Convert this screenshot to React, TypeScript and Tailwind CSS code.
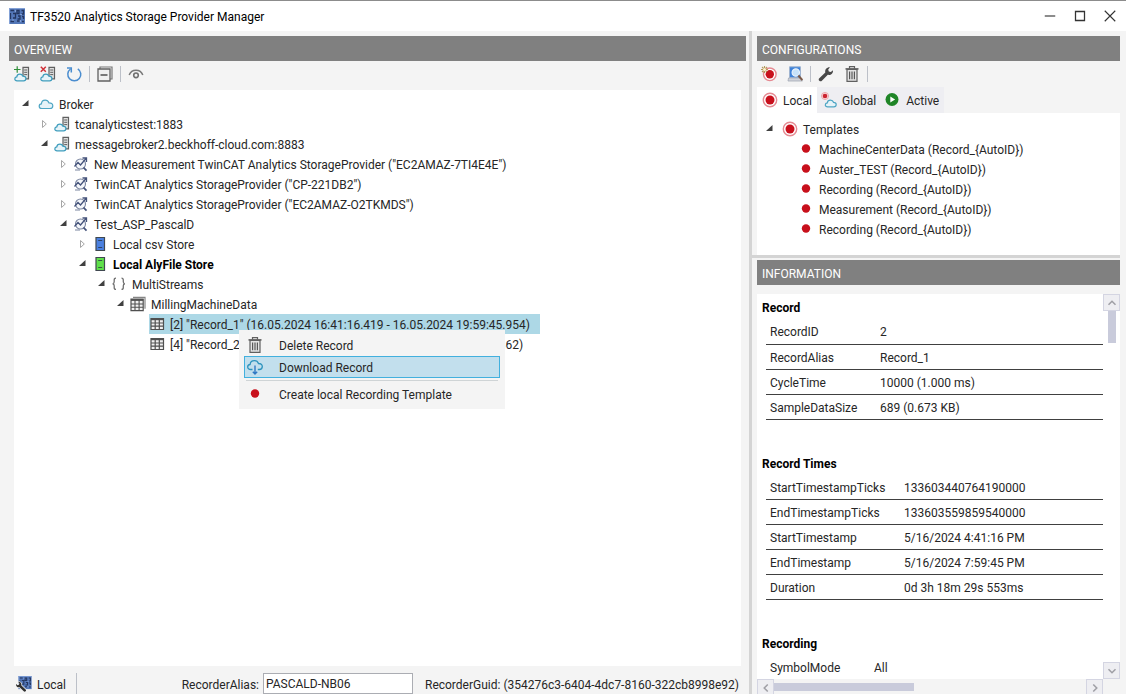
import React from "react";

type IconProps = { className?: string };

const Svg = ({ className = "size-4", children }: { className?: string; children: React.ReactNode }) => (
  <svg viewBox="0 0 16 16" className={`shrink-0 ${className}`} fill="none" aria-hidden="true">
    {children}
  </svg>
);

const cloudPath = "M3.800 12.500C2.200 12.500 1.200 11.500 1.200 10.200s.9-2.200 2.200-2.300C3.600 5.600 5.100 4.200 7.200 4.200c1.800 0 3.100 1 3.700 2.600 2.200-.1 3.900 1 3.900 2.900 0 1.700-1.200 2.800-2.800 2.800z";

const Cloud = ({ className }: IconProps) => (
  <Svg className={className}>
    <path d={cloudPath} fill="#e6f3f8" stroke="#4fa6c4" strokeWidth="1.200" />
  </Svg>
);

const ServerShapes = () => (
  <>
    <path d="M9 1.300h5.500v11.500H9z" fill="#e0e0e0" stroke="#606060" strokeWidth="1.200" />
    <path d="M10.200 4h3M10.200 6.300h3M10.200 8.600h3" stroke="#606060" />
    <path
      d="M3 14.800c-1.300 0-2.200-.8-2.200-1.900S1.700 11 2.800 10.900C3 9.200 4.200 8.200 5.900 8.200c1.500 0 2.600.8 3 2 1.700 0 3 .8 3 2.300 0 1.400-1 2.300-2.300 2.300z"
      fill="#e6f3f8"
      stroke="#3f9dbd"
      strokeWidth="1.200"
    />
  </>
);

const CloudServer = () => (
  <Svg>
    <ServerShapes />
  </Svg>
);

const AddServer = () => (
  <Svg>
    <ServerShapes />
    <path d="M0 3.500h6.500M3.200.200v6.600" stroke="#2f8f3a" strokeWidth="1.200" />
  </Svg>
);

const RemoveServer = () => (
  <Svg>
    <ServerShapes />
    <path d="M.8.800l5 5M5.800.800l-5 5" stroke="#cf3038" strokeWidth="1.500" />
  </Svg>
);

const Refresh = () => (
  <Svg>
    <path d="M4.500 3A6.500 6.500 0 1 0 11.800 2.800" stroke="#4a8dcf" strokeWidth="1.500" />
    <path d="M1 2h4.300v4.500" stroke="#4a8dcf" strokeWidth="1.500" />
  </Svg>
);

const CollapseAll = () => (
  <Svg>
    <path d="M3 3V1h12v12h-2" stroke="#777" strokeWidth="1.200" />
    <path d="M1 3h12v12H1z" fill="#f0f0f0" stroke="#606060" strokeWidth="1.300" />
    <path d="M3.500 9h7" stroke="#505050" strokeWidth="1.500" />
  </Svg>
);

const Eye = () => (
  <Svg>
    <path d="M1.200 9C2.400 5.800 4.900 4.200 8 4.200s5.600 1.600 6.800 4.800" stroke="#787878" strokeWidth="1.500" />
    <circle cx="8" cy="9.300" r="2.300" stroke="#707070" strokeWidth="1.600" />
  </Svg>
);

const Provider = () => (
  <Svg>
    <circle cx="7.500" cy="8" r="5" fill="#f3f5f9" stroke="#7b86a0" strokeWidth="1.100" />
    <path d="M1.500 10.500l3.500-4 2.500 2.500L13 2.500M9.500 2h4v4" stroke="#44527a" strokeWidth="1.300" />
    <path d="M10.500 11.500l3 3.200" stroke="#44527a" strokeWidth="1.800" />
    <path d="M2 14h5" stroke="#7b86a0" />
  </Svg>
);

const Store = ({ color }: { color: string }) => (
  <Svg>
    <path d="M4 1.500h8.500v13H4z" fill={color} stroke="#404850" strokeWidth="1.200" />
    <path d="M6.200 4.500h4M6.200 11.500h4" stroke="#26303c" strokeOpacity=".75" />
  </Svg>
);

const Braces = () => (
  <Svg>
    <path
      d="M5 2.200C3.400 2.200 3.200 3 3.200 4.200v1.600C3.200 7 2.700 7.600 1.700 7.800 2.700 8 3.200 8.600 3.200 9.800v1.600c0 1.200.2 2 1.800 2M10.500 2.200c1.600 0 1.800.8 1.800 2v1.600c0 1.200.5 1.800 1.500 2-1 .2-1.500.8-1.500 2v1.600c0 1.200-.2 2-1.800 2"
      stroke="#707070"
      strokeWidth="1.300"
    />
  </Svg>
);

const Grid = () => (
  <Svg>
    <path d="M2 2.500h12.500v11H2z" fill="#f0f0f0" stroke="#505050" strokeWidth="1.200" />
    <path d="M2 3.200h12.500" stroke="#505050" strokeWidth="2" />
    <path d="M2 7h12.500M2 10.200h12.500M6.200 3v10.500M10.300 3v10.500" stroke="#505050" strokeWidth="1.200" />
  </Svg>
);

const GridStack = () => (
  <Svg>
    <path d="M3 1.300h12v11.500" stroke="#858585" strokeWidth="1.200" />
    <path d="M1 3.200h12.200v11.500H1z" fill="#f0f0f0" stroke="#505050" strokeWidth="1.200" />
    <path d="M1 4h12.200" stroke="#505050" strokeWidth="1.800" />
    <path d="M1 8h12.200M1 11.300h12.200M5 4v10.700M9.100 4v10.700" stroke="#505050" strokeWidth="1.100" />
  </Svg>
);

const Dot = () => (
  <Svg>
    <circle cx="8" cy="7.500" r="4.200" fill="#c8101c" />
  </Svg>
);

const RecordRing = () => (
  <Svg>
    <circle cx="8" cy="8" r="6.700" fill="#fff" stroke="#e58a92" strokeWidth="1.400" />
    <circle cx="8" cy="8" r="4.500" fill="#c8101c" />
  </Svg>
);

const NewRecord = () => (
  <Svg>
    <circle cx="8.800" cy="8.300" r="6.300" fill="#fff" stroke="#e58a92" strokeWidth="1.400" />
    <circle cx="8.800" cy="8.300" r="4.200" fill="#c8101c" />
    <path d="M3.500 0v7M0 3.500h7M1 1l5 5M6 1L1 6" stroke="#b59a5c" strokeWidth="1.100" />
    <circle cx="3.500" cy="3.500" r="1.500" fill="#fff3cf" />
  </Svg>
);

const SearchDevice = () => (
  <Svg>
    <path d="M2.500.8h11v11h-11z" fill="#3f83da" stroke="#9fb4d0" />
    <path d="M1.500 12h12l2 3H1z" fill="#cfd3da" stroke="#a3aab5" strokeWidth=".8" />
    <circle cx="8.800" cy="6.500" r="3.700" fill="#c6e2fa" stroke="#e8f2fb" strokeWidth="1.200" />
    <path d="M11.300 9.500l4 4.500" stroke="#7a5a48" strokeWidth="2" />
  </Svg>
);

const wrenchPath = "M1.300 14.700c-.8-.8-.8-1.700 0-2.500l6-5.700C6.700 3.500 8.700 1 12 1.200L10.200 3.500l.6 2 2 .6L15 4.200c.3 3.200-2.300 5.300-5.200 4.600l-5.900 6c-.8.800-1.800.7-2.600-.1z";

const Wrench = () => (
  <Svg>
    <path d={wrenchPath} fill="#484848" />
  </Svg>
);

const Trash = () => (
  <Svg>
    <path d="M5.500 2.500V.7h5v1.800" stroke="#606060" strokeWidth="1.200" />
    <path d="M1.500 2.900h13" stroke="#585858" strokeWidth="1.500" />
    <path d="M3 3.500h10v11.800H3z" fill="#e3e3e3" stroke="#606060" strokeWidth="1.200" />
    <path d="M5.600 5.500v7.700M8 5.500v7.700M10.400 5.500v7.700" stroke="#585858" strokeWidth="1.200" />
  </Svg>
);

const GlobalIcon = () => (
  <Svg>
    <circle cx="4" cy="4" r="3.500" fill="#fbe3e5" stroke="#eba3a9" />
    <circle cx="4" cy="4" r="2.300" fill="#cc2430" />
    <path
      d="M6.600 14.800c-1.400 0-2.300-.8-2.300-1.900s.9-1.900 2-2c.2-1.700 1.500-2.700 3.100-2.700 1.500 0 2.700.8 3.100 2.100 1.700 0 2.700 1 2.700 2.200 0 1.400-1 2.300-2.400 2.300z"
      fill="#e6f3f8"
      stroke="#4fa6c4"
      strokeWidth="1.200"
    />
  </Svg>
);

const Play = () => (
  <Svg>
    <circle cx="7" cy="7.500" r="6.500" fill="#1f8527" />
    <path d="M5.300 4.500l4.800 3-4.800 3z" fill="#fff" />
  </Svg>
);

const Download = () => (
  <Svg>
    <path d="M5.500 10.500H3.800C1.900 10.500.7 9.400.7 8s1-2.400 2.400-2.500C3.300 3.200 5 1.600 7.500 1.600c2 0 3.400 1.100 4 2.900 2.300-.1 3.800 1.100 3.800 3s-1.300 3-3 3h-1.500" stroke="#2c93bd" strokeWidth="1.300" />
    <path d="M8 6.500v8.300M5.800 12.700L8 14.900l2.200-2.200" stroke="#2f78c4" strokeWidth="1.400" />
  </Svg>
);

const BoardShapes = () => (
  <>
    <path d="M0 0h16v16H0z" fill="#5377b8" />
    <path d="M1.500 2.500H5M1.500 5v6M4 5.500h2.500V10H4M8 2.500h2v3H8zM12.500 2.500h2V6h-2M9 8h2v3H8.500M13 8.500h1.500V11M1.500 13.500H5M8 13h2.500M13 13.500h2" stroke="#24365f" strokeWidth="1.300" />
    <path d="M0 .5h16M.5 0v16M6.500 2v2M11 6.500h2M3 12h2M11.500 12v2" stroke="#83a1d6" />
  </>
);

const AppIcon = () => (
  <Svg>
    <BoardShapes />
  </Svg>
);

const LocalTool = () => (
  <Svg>
    <g transform="translate(2.500 0) scale(.82)">
      <BoardShapes />
    </g>
    <g transform="translate(10.500 5) scale(-.7 .7)">
      <path d={wrenchPath} fill="#303030" stroke="#f4f4f4" strokeWidth="2" paintOrder="stroke" />
    </g>
  </Svg>
);

const Separator = () => <span className="h-4 w-px bg-[#bcc0c8]" />;

const Label = ({ className = "", children }: { className?: string; children: React.ReactNode }) => (
  <span className={`pt-0.5 ${className}`}>{children}</span>
);

type ExpandState = "open" | "closed" | "none";

const Expander = ({ state }: { state: ExpandState }) => (
  <svg viewBox="0 0 8 10" className="h-2.5 w-2 shrink-0" aria-hidden="true">
    {state === "open" && <path d="M7.500 1v6H1z" fill="#404040" />}
    {state === "closed" && <path d="M2.500 1.500L6.300 5 2.500 8.500z" fill="#fff" stroke="#a6a6a6" />}
  </svg>
);

type Node = { level: number; state: ExpandState; icon: React.ReactNode; text: string; bold?: boolean; selected?: boolean };

const nodes: Node[] = [
  { level: 0, state: "open", icon: <Cloud />, text: "Broker" },
  { level: 1, state: "closed", icon: <CloudServer />, text: "tcanalyticstest:1883" },
  { level: 1, state: "open", icon: <CloudServer />, text: "messagebroker2.beckhoff-cloud.com:8883" },
  { level: 2, state: "closed", icon: <Provider />, text: 'New Measurement TwinCAT Analytics StorageProvider ("EC2AMAZ-7TI4E4E")' },
  { level: 2, state: "closed", icon: <Provider />, text: 'TwinCAT Analytics StorageProvider ("CP-221DB2")' },
  { level: 2, state: "closed", icon: <Provider />, text: 'TwinCAT Analytics StorageProvider ("EC2AMAZ-O2TKMDS")' },
  { level: 2, state: "open", icon: <Provider />, text: "Test_ASP_PascalD" },
  { level: 3, state: "closed", icon: <Store color="#4a80e0" />, text: "Local csv Store" },
  { level: 3, state: "open", icon: <Store color="#5fe04a" />, text: "Local AlyFile Store", bold: true },
  { level: 4, state: "open", icon: <Braces />, text: "MultiStreams" },
  { level: 5, state: "open", icon: <GridStack />, text: "MillingMachineData" },
  { level: 6, state: "none", icon: <Grid />, text: '[2] "Record_1" (16.05.2024 16:41:16.419 - 16.05.2024 19:59:45.954)', selected: true },
  { level: 6, state: "none", icon: <Grid />, text: '[4] "Record_2" (17.05.2024 08:03:12.107 - 17.05.2024 9:14:38.362)' },
];

const indents = ["pl-[7px]", "pl-[26px]", "pl-[45px]", "pl-[64px]", "pl-[83px]", "pl-[102px]", "pl-[121px]"];

const TreeRow = ({ node }: { node: Node }) => (
  <li role="treeitem" aria-selected={!!node.selected} className={`flex h-5 items-center ${indents[node.level]}`}>
    <Expander state={node.state} />
    <span
      className={`flex h-5 items-center gap-[5px] whitespace-nowrap pr-2.5 ${node.level === 0 ? "ml-[9px]" : "ml-1.5"} ${
        node.selected ? "bg-[#add8e6]" : ""
      }`}
    >
      {node.icon}
      <Label className={node.bold ? "font-bold text-black" : ""}>{node.text}</Label>
    </span>
  </li>
);

const PanelHeader = ({ title }: { title: string }) => (
  <h2 className="flex h-[25px] shrink-0 items-center bg-[#808080] px-[5px] text-white">
    <Label>{title}</Label>
  </h2>
);

const ToolButton = ({ label, children }: { label: string; children: React.ReactNode }) => (
  <button type="button" aria-label={label} className="flex size-4 items-center justify-center">
    {children}
  </button>
);

const ContextMenu = () => (
  <div role="menu" className="absolute left-[225px] top-60 flex w-[266px] flex-col bg-[#f4f4f4] px-[5px] py-1">
    <button type="button" role="menuitem" className="flex h-[22px] items-center gap-4 px-[3px]">
      <Trash />
      <Label>Delete Record</Label>
    </button>
    <button type="button" role="menuitem" className="flex h-[22px] items-center gap-4 border border-[#42b0de] bg-[#c2dfed] px-0.5">
      <Download />
      <Label>Download Record</Label>
    </button>
    <div className="mx-0.5 my-0.5 h-px bg-[#cfd4d6]" />
    <button type="button" role="menuitem" className="flex h-[22px] items-center gap-4 px-[3px]">
      <Dot />
      <Label>Create local Recording Template</Label>
    </button>
  </div>
);

const Overview = () => (
  <section className="flex min-w-0 flex-1 flex-col">
    <PanelHeader title="OVERVIEW" />
    <div className="flex h-[29px] shrink-0 items-center gap-[7px] px-[5px] pb-1">
      <div className="flex gap-2.5">
        <ToolButton label="Add broker"><AddServer /></ToolButton>
        <ToolButton label="Remove broker"><RemoveServer /></ToolButton>
        <ToolButton label="Refresh"><Refresh /></ToolButton>
      </div>
      <Separator />
      <ToolButton label="Collapse all"><CollapseAll /></ToolButton>
      <Separator />
      <ToolButton label="Watch"><Eye /></ToolButton>
    </div>
    <div className="relative mx-[5px] flex-1 bg-white pt-1">
      <ul role="tree">
        {nodes.map((node) => (
          <TreeRow key={node.text} node={node} />
        ))}
      </ul>
      <ContextMenu />
    </div>
    <footer className="flex h-7 shrink-0 items-end justify-between pl-[7px] pr-[7px]">
      <div className="flex h-[21px] items-center gap-[5px] border-r border-[#bcc0c8] pr-2.5">
        <LocalTool />
        <Label>Local</Label>
      </div>
      <div className="flex h-[21px] items-center whitespace-nowrap">
        <label htmlFor="alias" className="pt-0.5">RecorderAlias:</label>
        <input id="alias" defaultValue="PASCALD-NB06" className="ml-1 mr-3 h-[21px] w-[150px] border border-[#abadb3] bg-white px-0.5 outline-none" />
        <Label>RecorderGuid: (354276c3-6404-4dc7-8160-322cb8998e92)</Label>
      </div>
    </footer>
  </section>
);

const templates = [
  "MachineCenterData (Record_{AutoID})",
  "Auster_TEST (Record_{AutoID})",
  "Recording (Record_{AutoID})",
  "Measurement (Record_{AutoID})",
  "Recording (Record_{AutoID})",
];

const Configurations = () => (
  <section className="flex flex-col">
    <PanelHeader title="CONFIGURATIONS" />
    <div className="flex h-[26px] items-center gap-[7px] px-1">
      <div className="flex gap-2.5">
        <ToolButton label="New recording"><NewRecord /></ToolButton>
        <ToolButton label="Search target"><SearchDevice /></ToolButton>
      </div>
      <Separator />
      <div className="flex gap-2.5">
        <ToolButton label="Settings"><Wrench /></ToolButton>
        <ToolButton label="Delete"><Trash /></ToolButton>
      </div>
      <Separator />
    </div>
    <div role="tablist" className="flex h-[26px]">
      <button type="button" role="tab" aria-selected="true" className="flex items-center gap-[5px] bg-white px-[5px]">
        <RecordRing />
        <Label>Local</Label>
      </button>
      <button type="button" role="tab" aria-selected="false" className="flex items-center gap-[5px] bg-[#eeeef2] px-1">
        <GlobalIcon />
        <Label>Global</Label>
      </button>
      <button type="button" role="tab" aria-selected="false" className="flex items-center gap-[5px] bg-[#eeeef2] px-[5px]">
        <Play />
        <Label>Active</Label>
      </button>
    </div>
    <ul role="tree" className="h-[142px] bg-white pt-1.5">
      <li role="treeitem" className="flex h-5 items-center pl-2">
        <Expander state="open" />
        <span className="ml-[9px] flex items-center gap-[5px]">
          <RecordRing />
          <Label>Templates</Label>
        </span>
      </li>
      {templates.map((text, i) => (
        <li key={i} role="treeitem" className="flex h-5 items-center gap-[5px] pl-[41px]">
          <Dot />
          <Label>{text}</Label>
        </li>
      ))}
    </ul>
  </section>
);

type Group = { title: string; col: string; rows: [string, string][] };

const groups: Group[] = [
  {
    title: "Record",
    col: "w-[114px]",
    rows: [
      ["RecordID", "2"],
      ["RecordAlias", "Record_1"],
      ["CycleTime", "10000 (1.000 ms)"],
      ["SampleDataSize", "689 (0.673 KB)"],
    ],
  },
  {
    title: "Record Times",
    col: "w-[138px]",
    rows: [
      ["StartTimestampTicks", "133603440764190000"],
      ["EndTimestampTicks", "133603559859540000"],
      ["StartTimestamp", "5/16/2024 4:41:16 PM"],
      ["EndTimestamp", "5/16/2024 7:59:45 PM"],
      ["Duration", "0d 3h 18m 29s 553ms"],
    ],
  },
  { title: "Recording", col: "w-[108px]", rows: [["SymbolMode", "All"]] },
];

const arrows = { up: "M4 10l4-4 4 4", down: "M4 6l4 4 4-4", left: "M10 4L6 8l4 4", right: "M6 4l4 4-4 4" };

const ScrollButton = ({ dir }: { dir: keyof typeof arrows }) => (
  <button type="button" aria-label={`Scroll ${dir}`} className="flex size-[17px] shrink-0 items-center justify-center border border-[#d4d5e2] bg-[#eeeef2]">
    <Svg className="size-3.5">
      <path d={arrows[dir]} stroke="#a0a0a6" strokeWidth="1.800" />
    </Svg>
  </button>
);

const Information = () => (
  <section className="flex min-h-0 flex-1 flex-col">
    <PanelHeader title="INFORMATION" />
    <div className="mt-[9px] flex min-h-0 flex-1">
      <div className="flex min-w-0 flex-1 flex-col bg-white">
        <div className="flex min-h-0 flex-1 flex-col gap-[33px] overflow-hidden pt-[3px]">
          {groups.map((group) => (
            <div key={group.title} className="shrink-0">
              <h3 className="flex h-[22px] items-center px-[5px] font-bold text-black">{group.title}</h3>
              <div className="pl-[9px]">
                <table className="w-full table-fixed border-collapse">
                  <tbody>
                    {group.rows.map(([name, value]) => (
                      <tr key={name} className="h-[25px] border-b border-[#404040]">
                        <th scope="row" className={`p-0 pl-1 pt-0.5 text-left font-normal ${group.col}`}>{name}</th>
                        <td className="p-0 pt-0.5">{value}</td>
                      </tr>
                    ))}
                  </tbody>
                </table>
              </div>
            </div>
          ))}
        </div>
        <div className="flex h-[15px] shrink-0 overflow-hidden bg-[#f4f4f4]">
          <ScrollButton dir="left" />
          <div className="flex-1">
            <div className="mt-1 h-2 w-[45%] bg-[#c9cbdb]" />
          </div>
          <ScrollButton dir="right" />
        </div>
      </div>
      <div className="mb-[15px] flex w-[17px] flex-col items-center bg-white">
        <ScrollButton dir="up" />
        <div className="h-8 w-2 bg-[#c9cbdb]" />
        <div className="flex-1" />
        <ScrollButton dir="down" />
      </div>
    </div>
  </section>
);

export default function App() {
  return (
    <div className="flex h-screen flex-col overflow-hidden border-t border-[#8c8c8c] bg-[#f4f4f4] font-['Roboto','Open_Sans',sans-serif] text-[12px] leading-4 text-[#262626]">
      <header className="flex h-[30px] shrink-0 items-center bg-white pl-[9px] pr-2.5 text-black">
        <AppIcon />
        <h1 className="ml-[5px] flex-1 pt-0.5">TF3520 Analytics Storage Provider Manager</h1>
        <div className="flex gap-[18px]">
          <button type="button" aria-label="Minimize" className="size-3">
            <Svg className="size-3"><path d="M1 8h14" stroke="#333" strokeWidth="1.500" /></Svg>
          </button>
          <button type="button" aria-label="Maximize" className="size-3">
            <Svg className="size-3"><path d="M2 2h12v12H2z" stroke="#333" strokeWidth="1.700" /></Svg>
          </button>
          <button type="button" aria-label="Close" className="size-3">
            <Svg className="size-3"><path d="M1 1l14 14M15 1L1 15" stroke="#333" strokeWidth="1.500" /></Svg>
          </button>
        </div>
      </header>
      <main className="flex min-h-0 flex-1 pl-[9px] pr-1.5 pt-[5px]">
        <Overview />
        <div className="-mt-[5px] ml-[3px] w-[3px] shrink-0 bg-[#d4d4d4]" />
        <aside className="flex w-[368px] shrink-0 flex-col pl-[5px]">
          <Configurations />
          <div className="-ml-[5px] mb-0.5 h-[3px] shrink-0 bg-[#d4d4d4]" />
          <Information />
        </aside>
      </main>
    </div>
  );
}
